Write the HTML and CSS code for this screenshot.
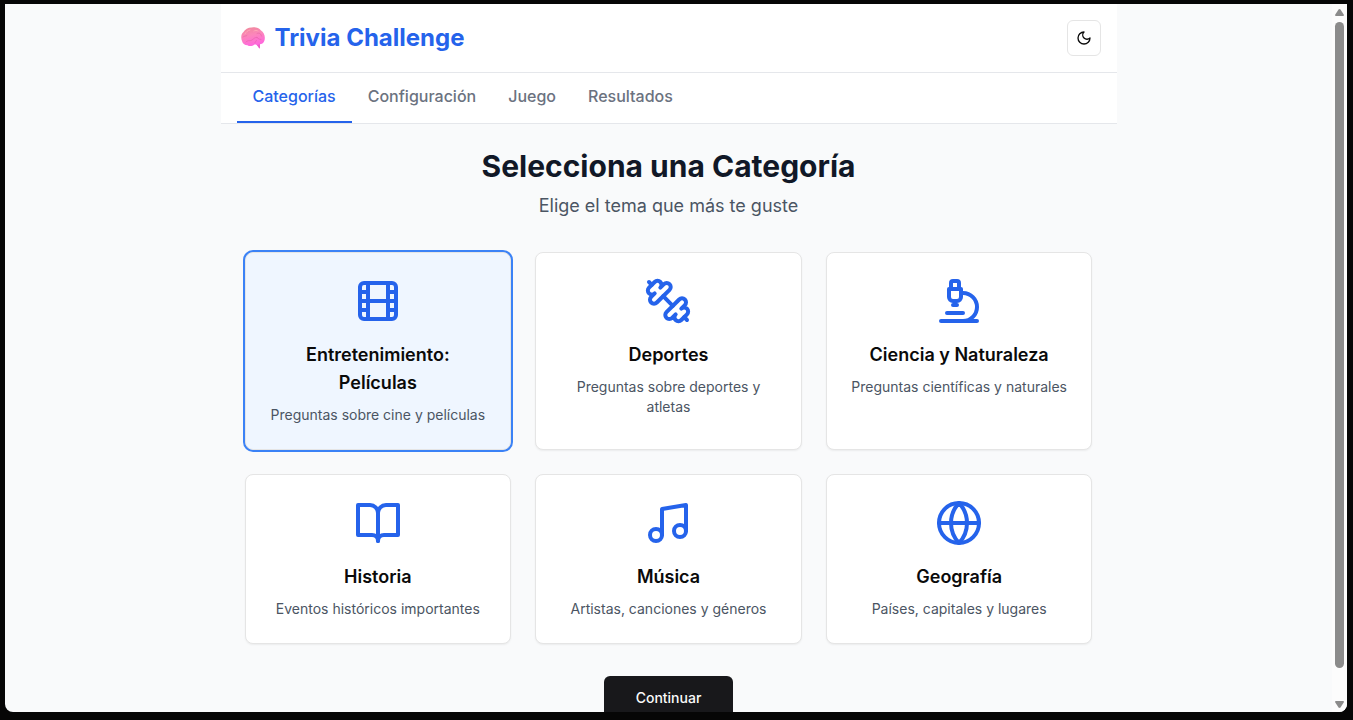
FILE: index.html
```html
<!DOCTYPE html>
<html lang="es">
<head>
<meta charset="utf-8">
<meta name="viewport" content="width=device-width, initial-scale=1">
<title>Trivia Challenge</title>
<link rel="stylesheet" href="styles.css">
</head>
<body>
<div class="window">
  <div class="viewport">
    <div class="app">
      <header class="header">
        <h1 class="brand">
          <svg class="brand-icon" viewBox="0 0 24 22" aria-hidden="true">
            <defs>
              <linearGradient id="brain" x1="0" y1="0" x2="0.3" y2="1">
                <stop offset="0" stop-color="#ee8a96"/>
                <stop offset="0.5" stop-color="#fc86bb"/>
                <stop offset="1" stop-color="#ff68dc"/>
              </linearGradient>
            </defs>
            <path fill="#ee5fcb" d="M15 17l4-1 0 5.500c-1.500 0-1.500-1.500-3-3z"/>
            <path fill="url(#brain)" d="M1 14C-.3 11 0 7 2.500 5 4 2 7.500.2 11 .4c3-.7 7 .2 9 3 2.500 1.500 4 4.500 3.800 7.600.1 3.500-1.800 6-4.800 6.300-2 .8-4 .2-5.500.2-2.200 2-5.500 1.900-7 .7C3.500 18.200 1.600 16.700 1 14z"/>
            <g fill="none" stroke="#dc5a9c" stroke-opacity="0.6" stroke-width="0.7" stroke-linecap="round">
              <path d="M5 15c2-2.500 4-.5 6-2s3-3 5-2.500M2 10c1.500-1.500 3-.5 4-1.500M16 6.500c2-1 4 0 4.500 2.500M16 10.500c1.500 1 2 2 4 2M14 16c0-1.500 1-1.500 1.500-2.500"/>
            </g>
            <path d="M4 7c1-2 2.500-3.500 5-4M13 4c1-.8 3-.8 4 0" fill="none" stroke="#ffa6b8" stroke-width="1" stroke-linecap="round"/>
          </svg>
          <span>Trivia Challenge</span>
        </h1>
        <button class="theme-button" type="button" aria-label="Cambiar tema">
          <svg class="icon-small" viewBox="0 0 24 24" aria-hidden="true"><path d="M12 3a6 6 0 0 0 9 9 9 9 0 1 1-9-9Z"/></svg>
        </button>
      </header>
      <nav class="tabs" aria-label="Secciones">
        <button class="tab tab-active" type="button" aria-current="page">Categorías</button>
        <button class="tab" type="button">Configuración</button>
        <button class="tab" type="button">Juego</button>
        <button class="tab" type="button">Resultados</button>
      </nav>
      <main class="main">
        <h2 class="heading">Selecciona una Categoría</h2>
        <p class="subheading">Elige el tema que más te guste</p>
        <div class="grid">
          <button class="card card-selected" type="button" aria-pressed="true">
            <svg class="icon" viewBox="0 0 24 24" aria-hidden="true"><rect width="18" height="18" x="3" y="3" rx="2"/><path d="M7 3v18M3 7.500h4M3 12h18M3 16.500h4M17 3v18M17 7.500h4M17 16.500h4"/></svg>
            <span class="card-title">Entretenimiento: Películas</span>
            <span class="card-text">Preguntas sobre cine y películas</span>
          </button>
          <button class="card" type="button" aria-pressed="false">
            <svg class="icon" viewBox="0 0 24 24" aria-hidden="true"><path d="M14.400 14.400 9.600 9.600"/><path d="M18.657 21.485a2 2 0 1 1-2.829-2.828l-1.767 1.768a2 2 0 1 1-2.829-2.829l6.364-6.364a2 2 0 1 1 2.829 2.829l-1.768 1.767a2 2 0 1 1 2.828 2.829z"/><path d="m21.500 21.500-1.400-1.400M3.900 3.900 2.500 2.500"/><path d="M6.404 12.768a2 2 0 1 1-2.829-2.829l1.768-1.767a2 2 0 1 1-2.828-2.829l2.828-2.828a2 2 0 1 1 2.829 2.828l1.767-1.768a2 2 0 1 1 2.829 2.829z"/></svg>
            <span class="card-title">Deportes</span>
            <span class="card-text">Preguntas sobre deportes y atletas</span>
          </button>
          <button class="card" type="button" aria-pressed="false">
            <svg class="icon" viewBox="0 0 24 24" aria-hidden="true"><path d="M6 18h8M3 22h18M14 22a7 7 0 1 0 0-14h-1M9 14h2"/><path d="M9 12a2 2 0 0 1-2-2V6h6v4a2 2 0 0 1-2 2Z"/><path d="M12 6V3a1 1 0 0 0-1-1H9a1 1 0 0 0-1 1v3"/></svg>
            <span class="card-title">Ciencia y Naturaleza</span>
            <span class="card-text">Preguntas científicas y naturales</span>
          </button>
          <button class="card" type="button" aria-pressed="false">
            <svg class="icon" viewBox="0 0 24 24" aria-hidden="true"><path d="M2 3h6a4 4 0 0 1 4 4v14a3 3 0 0 0-3-3H2z"/><path d="M22 3h-6a4 4 0 0 0-4 4v14a3 3 0 0 1 3-3h7z"/></svg>
            <span class="card-title">Historia</span>
            <span class="card-text">Eventos históricos importantes</span>
          </button>
          <button class="card" type="button" aria-pressed="false">
            <svg class="icon" viewBox="0 0 24 24" aria-hidden="true"><path d="M9 18V5l12-2v13"/><circle cx="6" cy="18" r="3"/><circle cx="18" cy="16" r="3"/></svg>
            <span class="card-title">Música</span>
            <span class="card-text">Artistas, canciones y géneros</span>
          </button>
          <button class="card" type="button" aria-pressed="false">
            <svg class="icon" viewBox="0 0 24 24" aria-hidden="true"><circle cx="12" cy="12" r="10"/><path d="M12 2a14.500 14.500 0 0 0 0 20 14.500 14.500 0 0 0 0-20M2 12h20"/></svg>
            <span class="card-title">Geografía</span>
            <span class="card-text">Países, capitales y lugares</span>
          </button>
        </div>
        <button class="continue" type="button">Continuar</button>
      </main>
    </div>
  </div>
  <div class="scrollbar" aria-hidden="true">
    <svg class="arrow" viewBox="0 0 9 7"><path d="M4.500 0 5.500 .6 9 6 8.500 7h-8L0 6 3.500 .6z"/></svg>
    <div class="track"><div class="thumb"></div></div>
    <svg class="arrow" viewBox="0 0 9 7"><path d="M4.500 7 5.500 6.400 9 1 8.500 0h-8L0 1 3.500 6.400z"/></svg>
  </div>
</div>
</body>
</html>
```
FILE: styles.css
```css
* { box-sizing: border-box; }

body {
  margin: 0;
  height: 100vh;
  padding: 4px 6px 8px 5px;
  background: #060606;
  color: #0a0a0a;
  font-family: Inter, "Liberation Sans", sans-serif;
}

button {
  font: inherit;
  color: inherit;
  cursor: pointer;
}

.window {
  display: flex;
  height: 100%;
  overflow: hidden;
  border-radius: 0 0 8px 8px;
  background: #f9fafb;
}

.viewport {
  flex: 1;
  overflow: hidden;
}

.app {
  max-width: 896px;
  margin: 0 auto;
}

.header {
  display: flex;
  align-items: center;
  justify-content: space-between;
  padding: 16px;
  background: #fff;
  border-bottom: 1px solid #e5e7eb;
}

.brand {
  display: flex;
  align-items: center;
  gap: 10px;
  margin: 0;
  padding-left: 4px;
  color: #2563eb;
  font-size: 24px;
  line-height: 32px;
  font-weight: 700;
}

.brand-icon {
  width: 24px;
  height: 22px;
}

.theme-button {
  display: flex;
  align-items: center;
  justify-content: center;
  width: 34px;
  height: 36px;
  padding: 0;
  background: #fff;
  border: 1px solid #e5e5e5;
  border-radius: 6px;
}

.icon,
.icon-small {
  fill: none;
  stroke: currentColor;
  stroke-width: 2;
  stroke-linecap: round;
  stroke-linejoin: round;
}

.icon-small {
  width: 16px;
  height: 16px;
}

.tabs {
  display: flex;
  padding: 0 16px;
  background: #fff;
  border-bottom: 1px solid #e5e7eb;
}

.tab {
  padding: 11px 16px 13px;
  background: none;
  border: 0;
  border-bottom: 2px solid transparent;
  color: #6b7280;
  font-size: 16px;
  line-height: 24px;
  font-weight: 500;
}

.tab-active {
  color: #2563eb;
  border-bottom-color: #2563eb;
}

.main {
  display: flex;
  flex-direction: column;
  align-items: center;
  padding: 24px;
}

.heading {
  margin: 0 0 8px;
  color: #111827;
  font-size: 30px;
  line-height: 36px;
  font-weight: 700;
}

.subheading {
  margin: 0 0 32px;
  color: #4b5563;
  font-size: 18px;
  line-height: 28px;
}

.grid {
  display: grid;
  grid-template-columns: repeat(3, 1fr);
  gap: 24px;
  width: 100%;
  margin-bottom: 32px;
}

.card {
  display: flex;
  flex-direction: column;
  align-items: center;
  padding: 24px;
  background: #fff;
  border: 1px solid #e5e5e5;
  border-radius: 8px;
  box-shadow: 0 1px 2px rgb(0 0 0 / 6%);
  text-align: center;
}

.card-selected {
  background: #eff6ff;
  box-shadow: 0 0 0 2px #3b82f6;
}

.icon {
  width: 48px;
  height: 48px;
  margin-bottom: 16px;
  color: #2563eb;
}

.card-title {
  margin-bottom: 8px;
  font-size: 18px;
  line-height: 28px;
  font-weight: 600;
}

.card-text {
  color: #4b5563;
  font-size: 14px;
  line-height: 20px;
}

.continue {
  padding: 12px 32px;
  background: #18181b;
  border: 0;
  border-radius: 6px;
  color: #fafafa;
  font-size: 14px;
  line-height: 20px;
  font-weight: 500;
}

.scrollbar {
  display: flex;
  flex-direction: column;
  align-items: center;
  gap: 6px;
  width: 15px;
  padding: 5px 0 4px;
  background: #fcfcfc;
}

.arrow {
  width: 9px;
  height: 7px;
  fill: #8b8b8b;
}

.track {
  flex: 1;
  width: 9px;
}

.thumb {
  height: 96%;
  border-radius: 5px;
  background: #8b8b8b;
}
```
